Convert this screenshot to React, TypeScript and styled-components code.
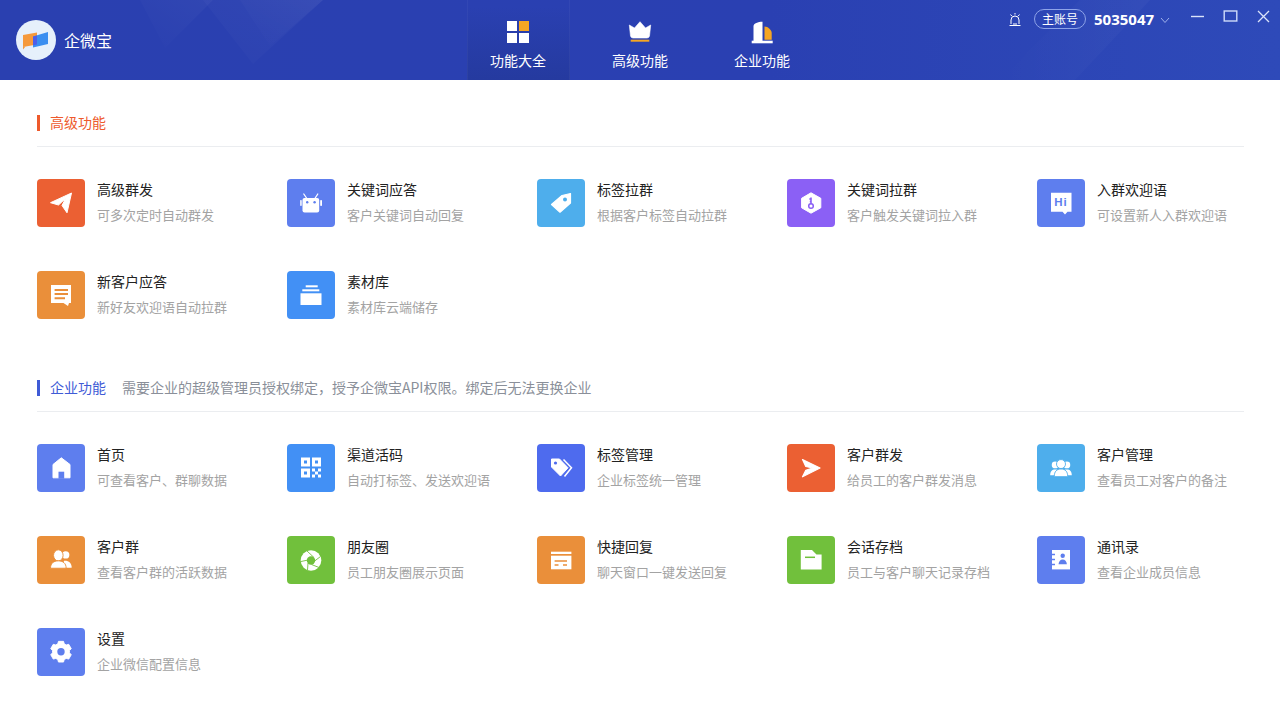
import React from 'react';
import styled, { createGlobalStyle } from 'styled-components';

const GlobalStyle = createGlobalStyle`
  html, body {
    margin: 0;
    padding: 0;
    background: #fff;
    font-family: "Noto Sans CJK SC", "Liberation Sans", sans-serif;
  }
`;

const W = '#fff';

const icons: Record<string, (c: string) => React.ReactNode> = {
  plane: () => <path d="M13.5 23.7 34.5 14 30 33.8 25 26.5 28.5 19.5 21.5 26Z" fill={W} stroke={W} strokeWidth="1" strokeLinejoin="round" />,
  robot: c => (
    <>
      <path d="M16.8 15 19.5 19M30.8 15 28.2 19" stroke={W} strokeWidth="1.3" strokeLinecap="round" />
      <path d="M17.5 19H30.2A2 2 0 0 1 32.2 21V31.5A2 2 0 0 1 30.2 33.5H17.5A2 2 0 0 1 15.5 31.5V21A2 2 0 0 1 17.5 19Z" fill={W} />
      <rect x="13.2" y="21" width="1.5" height="6" rx=".7" fill={W} />
      <rect x="33.2" y="21" width="1.8" height="6" rx=".8" fill={W} />
      <circle cx="20.2" cy="23.3" r="1.2" fill={c} />
      <circle cx="27.6" cy="23.3" r="1.2" fill={c} />
    </>
  ),
  tag: c => (
    <>
      <path d="M25 16.5 33.5 14.5 33.5 24 23 33.2 14.5 25.5Z" fill={W} stroke={W} strokeWidth="1.2" strokeLinejoin="round" />
      <circle cx="28" cy="20.5" r="2" fill={c} />
    </>
  ),
  hex: c => (
    <>
      <path d="M24 14 33.8 19.5V29L24 34.4 14.6 29V19.5Z" transform="translate(0 -.2)" fill={W} stroke={W} strokeWidth="1" strokeLinejoin="round" />
      <path d="M24 18.5V25M24 20H22.3M24 22.5H22.8" stroke={c} strokeWidth="1.6" fill="none" />
      <circle cx="24" cy="27" r="2.3" fill="none" stroke={c} strokeWidth="1.5" />
    </>
  ),
  hi: c => (
    <>
      <path d="M14 13.7H34.5V32.7H30.5L28 35.5 25.5 32.7H14Z" fill={W} />
      <text x="24" y="26.8" textAnchor="middle" fontSize="11.5" fontWeight="700" letterSpacing="1" fontFamily="'Liberation Sans', sans-serif" fill={c}>Hi</text>
    </>
  ),
  note: c => (
    <>
      <path d="M14 14H34V32H32L31 35 26.5 32H14Z" fill={W} />
      <path d="M17.6 19H31M17.6 23H31M17.6 27.3H28" stroke={c} strokeWidth="2" />
    </>
  ),
  stack: () => (
    <>
      <rect x="18.7" y="14.3" width="12" height="2" fill={W} />
      <rect x="15.3" y="18.3" width="17" height="2" fill={W} />
      <rect x="13.5" y="22.3" width="21" height="11.7" fill={W} />
    </>
  ),
  home: c => (
    <>
      <path d="M24.3 13.8 33 20.5V33.8H16V20.5Z" fill={W} stroke={W} strokeWidth="1" strokeLinejoin="round" />
      <rect x="21.5" y="27.7" width="5.7" height="7" fill={c} />
    </>
  ),
  qr: c => (
    <>
      <rect x="14" y="13.5" width="9" height="9" fill={W} />
      <rect x="25" y="13.5" width="9" height="9" fill={W} />
      <rect x="14" y="24.5" width="9" height="9" fill={W} />
      <rect x="17" y="16.5" width="3" height="3" fill={c} />
      <rect x="28" y="16.5" width="3" height="3" fill={c} />
      <rect x="17" y="27.5" width="3" height="3" fill={c} />
      <path d="M25 24.5h3v3h-3zM31 24.5h3v3h-3zM28 27.5h3v3h-3zM25 30.5h3v3h-3zM31 30.5h3v3h-3z" fill={W} />
    </>
  ),
  tags: c => (
    <>
      <path d="M14.5 15H22.5L31 23.8 23.5 32 14.5 23Z" fill={W} stroke={W} strokeWidth="1" strokeLinejoin="round" />
      <path d="M26.5 15.5 34.5 23.8 27.5 32.5" fill="none" stroke={W} strokeWidth="1.5" />
      <circle cx="18.5" cy="19" r="1.6" fill={c} />
    </>
  ),
  send: () => <path d="M15.5 15.5 33 24 15.5 32.8 18.8 26.3 25.5 24 18.8 22.5Z" fill={W} stroke={W} strokeWidth="1.2" strokeLinejoin="round" />,
  people3: c => (
    <g transform="translate(2.4 1.6) scale(.9)">
      <circle cx="17.5" cy="21.5" r="3.8" fill={W} />
      <circle cx="30.5" cy="21.5" r="3.8" fill={W} />
      <path d="M12 33C12 28.5 14 26.5 17.5 26.5S23 28.5 23 33ZM25 33C25 28.5 27 26.5 30.5 26.5S36 28.5 36 33Z" fill={W} />
      <circle cx="24" cy="20.5" r="5" fill={W} stroke={c} strokeWidth="1" />
      <path d="M16.5 34.5C16.5 28.5 19.5 26 24 26S31.5 28.5 31.5 34.5Z" fill={W} stroke={c} strokeWidth="1" />
    </g>
  ),
  people2: c => (
    <g transform="translate(2 .5) scale(.92)">
      <circle cx="29" cy="20" r="4" fill={W} />
      <path d="M27 26.5C32 26 35.5 28.5 35.5 34H27Z" fill={W} />
      <ellipse cx="21" cy="20.5" rx="5.2" ry="6" fill={W} stroke={c} strokeWidth="1" />
      <path d="M12.5 34.5C12.5 29 16 26.5 21 26.5S29.5 29 29.5 34.5Z" fill={W} stroke={c} strokeWidth="1" />
    </g>
  ),
  aperture: c => (
    <>
      <circle cx="24" cy="24.5" r="10.3" fill={W} />
      <path d="M20 15 27 21.5M33.5 20.5 27 25.5M32 31.5 24.5 28.5M20.5 34 21 27M14 25.5 21 24" stroke={c} strokeWidth=".9" />
      <circle cx="24" cy="24.5" r="4.2" fill={c} />
    </>
  ),
  box: c => (
    <>
      <rect x="14" y="15.7" width="20.4" height="2.3" fill={W} />
      <rect x="14" y="19.7" width="20.4" height="13.6" fill={W} />
      <path d="M17.6 25H30M17.6 29H21.5M26 29H30" stroke={c} strokeWidth="1.6" />
    </>
  ),
  folder: c => (
    <>
      <path d="M13.8 14H25L29.5 18.5H34.6V33.4H13.8Z" fill={W} />
      <path d="M18 21.3H28" stroke={c} strokeWidth="1.5" />
    </>
  ),
  contacts: c => (
    <>
      <rect x="15" y="14" width="18" height="19.4" fill={W} />
      <path d="M14.5 18.5H18M14.5 23.5H18M14.5 28.5H18" stroke={c} strokeWidth="1.5" />
      <circle cx="25.7" cy="19.8" r="2.2" fill={c} />
      <path d="M21.5 28.3C21.8 25 23.5 23.5 25.7 23.5S29.6 25 29.9 28.3Z" fill={c} />
    </>
  ),
  gear: c => (
    <>
      <path d="M21.2 14.5H26.8L27.6 17.3 29.8 18.5 32.6 17.8 35.4 22.6 33.4 24.8V27.2L35.4 29.4 32.6 34.2 29.8 33.5 27.6 34.7 26.8 37.5H21.2L20.4 34.7 18.2 33.5 15.4 34.2 12.6 29.4 14.6 27.2V24.8L12.6 22.6 15.4 17.8 18.2 18.5 20.4 17.3Z" transform="translate(2.4 .3) scale(.9)" fill={W} stroke={W} strokeWidth="1" strokeLinejoin="round" />
      <circle cx="24" cy="23.7" r="3.7" fill={c} />
    </>
  ),
};

type Feature = { icon: string; color: string; title: string; desc: string };

const RED = '#eb6033';
const BLUE = '#5e7eee';
const SKY = '#4eaeec';
const ORANGE = '#ea8f3a';
const AZURE = '#4290f5';
const GREEN = '#71c03c';

const ADVANCED: Feature[] = [
  { icon: 'plane', color: RED, title: '高级群发', desc: '可多次定时自动群发' },
  { icon: 'robot', color: BLUE, title: '关键词应答', desc: '客户关键词自动回复' },
  { icon: 'tag', color: SKY, title: '标签拉群', desc: '根据客户标签自动拉群' },
  { icon: 'hex', color: '#8b60f5', title: '关键词拉群', desc: '客户触发关键词拉入群' },
  { icon: 'hi', color: BLUE, title: '入群欢迎语', desc: '可设置新人入群欢迎语' },
  { icon: 'note', color: ORANGE, title: '新客户应答', desc: '新好友欢迎语自动拉群' },
  { icon: 'stack', color: AZURE, title: '素材库', desc: '素材库云端储存' },
];

const ENTERPRISE: Feature[] = [
  { icon: 'home', color: BLUE, title: '首页', desc: '可查看客户、群聊数据' },
  { icon: 'qr', color: AZURE, title: '渠道活码', desc: '自动打标签、发送欢迎语' },
  { icon: 'tags', color: '#4e6bee', title: '标签管理', desc: '企业标签统一管理' },
  { icon: 'send', color: RED, title: '客户群发', desc: '给员工的客户群发消息' },
  { icon: 'people3', color: SKY, title: '客户管理', desc: '查看员工对客户的备注' },
  { icon: 'people2', color: ORANGE, title: '客户群', desc: '查看客户群的活跃数据' },
  { icon: 'aperture', color: GREEN, title: '朋友圈', desc: '员工朋友圈展示页面' },
  { icon: 'box', color: ORANGE, title: '快捷回复', desc: '聊天窗口一键发送回复' },
  { icon: 'folder', color: GREEN, title: '会话存档', desc: '员工与客户聊天记录存档' },
  { icon: 'contacts', color: BLUE, title: '通讯录', desc: '查看企业成员信息' },
  { icon: 'gear', color: BLUE, title: '设置', desc: '企业微信配置信息' },
];

const Page = styled.div`
  width: 1280px;
  height: 720px;
  overflow: hidden;
  background: #fff;
`;

const Header = styled.header`
  position: relative;
  display: grid;
  grid-template-columns: 1fr auto 1fr;
  height: 80px;
  overflow: hidden;
  background: linear-gradient(90deg, #2a40b0 0%, #2a40b2 60%, #2e4ab9 100%);
  color: #fff;
`;

const Decor = styled.svg`
  position: absolute;
  inset: 0;
  pointer-events: none;
`;

const Brand = styled.div`
  position: relative;
  display: flex;
  align-items: center;
  gap: 8px;
  padding-left: 16px;
  font-size: 16px;
`;

const LogoCircle = styled.div`
  display: flex;
  align-items: center;
  justify-content: center;
  width: 40px;
  height: 40px;
  border-radius: 50%;
  background: #e6f0fb;
`;

const Nav = styled.nav`
  position: relative;
  display: flex;
  gap: 19px;
`;

const Tab = styled.div<{ $active?: boolean }>`
  display: flex;
  flex-direction: column;
  align-items: center;
  width: 103px;
  padding-top: 20px;
  box-sizing: border-box;
  font-size: 14px;
  line-height: 20px;
  background: ${p => (p.$active ? 'linear-gradient(180deg, rgba(36,56,160,0) 8%, #253a9f 100%)' : 'none')};
  box-shadow: ${p => (p.$active ? 'inset 1px 0 0 rgba(255,255,255,.04), inset -1px 0 0 rgba(255,255,255,.04)' : 'none')};

  svg {
    display: block;
    margin-bottom: 6px;
  }
`;

const Account = styled.div`
  position: relative;
  display: flex;
  align-items: flex-start;
  justify-content: flex-end;
  padding-top: 9px;
`;

const Pill = styled.span`
  display: block;
  box-sizing: border-box;
  width: 52px;
  height: 20px;
  margin: 0 8px 0 12px;
  border: 1px solid #8ea3e8;
  border-radius: 10px;
  font-size: 12px;
  line-height: 18px;
  text-align: center;
`;

const UserId = styled.span`
  font-size: 15px;
  font-weight: 700;
  line-height: 20px;
  width: 60px;
  font-family: "Noto Sans", "Liberation Sans", sans-serif;
`;

const WinButtons = styled.div`
  display: flex;
  gap: 18px;
  margin: -1px 9px 0 19px;
`;

const Main = styled.main`
  padding: 35px 36px 0 37px;
`;

const Section = styled.section`
  & + & {
    margin-top: 61px;
  }
`;

const SectionHead = styled.div`
  display: flex;
  align-items: flex-start;
  gap: 16px;
  height: 16px;
  padding-bottom: 15px;
  border-bottom: 1px solid #ebedf0;
  margin-bottom: 32px;
`;

const SectionTitle = styled.h2<{ $color: string }>`
  margin: 0;
  padding: 0 0 2px 10px;
  border-left: 3px solid ${p => p.$color};
  color: ${p => p.$color};
  font-size: 14px;
  font-weight: 400;
  line-height: 14px;
`;

const SectionNote = styled.span`
  color: #8a8f99;
  font-size: 14px;
  line-height: 14px;
`;

const Grid = styled.div`
  display: grid;
  grid-template-columns: repeat(5, 250px);
  grid-auto-rows: 48px;
  row-gap: 44px;
`;

const Item = styled.div`
  display: flex;
  gap: 12px;
`;

const Tile = styled.div<{ $color: string }>`
  flex: none;
  width: 48px;
  height: 48px;
  border-radius: 4px;
  background: ${p => p.$color};

  svg {
    display: block;
  }
`;

const ItemTitle = styled.div`
  color: #222;
  font-size: 14px;
  line-height: 20px;
`;

const ItemDesc = styled.div`
  margin-top: 6px;
  color: #a3a3a3;
  font-size: 13px;
  line-height: 20px;
`;

const FeatureGrid = ({ items }: { items: Feature[] }) => (
  <Grid>
    {items.map(f => (
      <Item key={f.title}>
        <Tile $color={f.color}>
          <svg width="48" height="48" viewBox="0 0 48 48">{icons[f.icon](f.color)}</svg>
        </Tile>
        <div>
          <ItemTitle>{f.title}</ItemTitle>
          <ItemDesc>{f.desc}</ItemDesc>
        </div>
      </Item>
    ))}
  </Grid>
);

export default function App() {
  return (
    <Page>
      <GlobalStyle />
      <Header>
        <Decor width="1280" height="80" viewBox="0 0 1280 80">
          <defs>
            <linearGradient id="fadeA" x1="0" y1="1" x2="1" y2="0">
              <stop offset="0" stopColor="#fff" stopOpacity="0" />
              <stop offset="1" stopColor="#fff" stopOpacity=".035" />
            </linearGradient>
            <linearGradient id="fadeB" x1="0" y1="1" x2="1" y2="0">
              <stop offset="0" stopColor="#fff" stopOpacity=".01" />
              <stop offset="1" stopColor="#fff" stopOpacity=".035" />
            </linearGradient>
            <linearGradient id="fadeC" x1="0" y1="0" x2="1" y2="0">
              <stop offset="0" stopColor="#fff" stopOpacity="0" />
              <stop offset="1" stopColor="#fff" stopOpacity=".03" />
            </linearGradient>
          </defs>
          <path d="M140 0H213L165 48Z" fill="url(#fadeA)" />
          <path d="M203 0H323L253 64Z" fill="url(#fadeB)" />
          <path d="M240 0H323L270 46Z" fill="url(#fadeA)" />
          <path d="M1000 80 1080 0H1150L1075 80Z" fill="url(#fadeC)" />
        </Decor>
        <Brand>
          <LogoCircle>
            <svg width="28" height="22" viewBox="0 0 28 22">
              <path d="M1 6 15 3.5V15.5L1 18Z" fill="#f5993c" />
              <path d="M1 18 1 20.5 3.5 17.6Z" fill="#f5993c" />
              <path d="M11 7.5 26 3V15L11 18.5Z" fill="#3a8ef0" />
              <path d="M11 7.5 15 6.6V15.5L11 16.2Z" fill="#4e5ee8" />
            </svg>
          </LogoCircle>
          企微宝
        </Brand>
        <Nav>
          <Tab $active>
            <svg width="24" height="24" viewBox="0 0 24 24">
              <rect x="1" y="1" width="10" height="10" fill="#fff" />
              <rect x="13" y="1" width="10" height="10" fill="#f5a623" />
              <rect x="1" y="13" width="10" height="10" fill="#fff" />
              <rect x="13" y="13" width="10" height="10" fill="#fff" />
            </svg>
            功能大全
          </Tab>
          <Tab>
            <svg width="24" height="24" viewBox="0 0 24 24">
              <path d="M1.3 5 6.5 8 12 1.7 17.5 8 22.7 5 21.5 16Q21 18 19 18H5Q3 18 2.5 16Z" fill="#fff" stroke="#fff" strokeWidth=".6" strokeLinejoin="round" />
              <rect x="2.7" y="19.7" width="18.6" height="2" fill="#f5a623" />
            </svg>
            高级功能
          </Tab>
          <Tab>
            <svg width="24" height="24" viewBox="0 0 24 24">
              <path d="M3.5 21V6C3.5 3.5 8 1.7 12.5 1.7V21Z" fill="#fff" />
              <path d="M14.5 6.5C18 6.5 21.7 10 21.7 13V19.7H14.5Z" fill="#f5a623" />
              <rect x="1.7" y="20.7" width="21" height="2.6" fill="#fff" />
            </svg>
            企业功能
          </Tab>
        </Nav>
        <Account>
          <svg width="14" height="20" viewBox="0 0 14 20">
            <path d="M3 15V11A4 4 0 0 1 11 11V15M5 15H9M1.5 16.5H12.5M7 4V5.5M2.5 5.5 3.8 7M11.5 5.5 10.2 7" fill="none" stroke="#fff" strokeWidth="1" />
          </svg>
          <Pill>主账号</Pill>
          <UserId>5035047</UserId>
          <svg width="12" height="20" viewBox="0 0 12 20" style={{ marginLeft: 5 }}>
            <path d="M2 9 6 13.5 10 9" fill="none" stroke="#9fb0ea" strokeWidth="1" />
          </svg>
          <WinButtons>
            <svg width="15" height="15" viewBox="0 0 15 15">
              <path d="M1 8.5H14" stroke="#dbe4fa" strokeWidth="1.4" />
            </svg>
            <svg width="15" height="15" viewBox="0 0 15 15">
              <rect x="1.2" y="3" width="12.6" height="10" fill="none" stroke="#cfdcfa" strokeWidth="1.4" />
            </svg>
            <svg width="15" height="15" viewBox="0 0 15 15">
              <path d="M2 3 13 14M13 3 2 14" stroke="#dbe4fa" strokeWidth="1.3" />
            </svg>
          </WinButtons>
        </Account>
      </Header>
      <Main>
        <Section>
          <SectionHead>
            <SectionTitle $color="#ee5a2c">高级功能</SectionTitle>
          </SectionHead>
          <FeatureGrid items={ADVANCED} />
        </Section>
        <Section>
          <SectionHead>
            <SectionTitle $color="#3f5bd6">企业功能</SectionTitle>
            <SectionNote>需要企业的超级管理员授权绑定，授予企微宝API权限。绑定后无法更换企业</SectionNote>
          </SectionHead>
          <FeatureGrid items={ENTERPRISE} />
        </Section>
      </Main>
    </Page>
  );
}
